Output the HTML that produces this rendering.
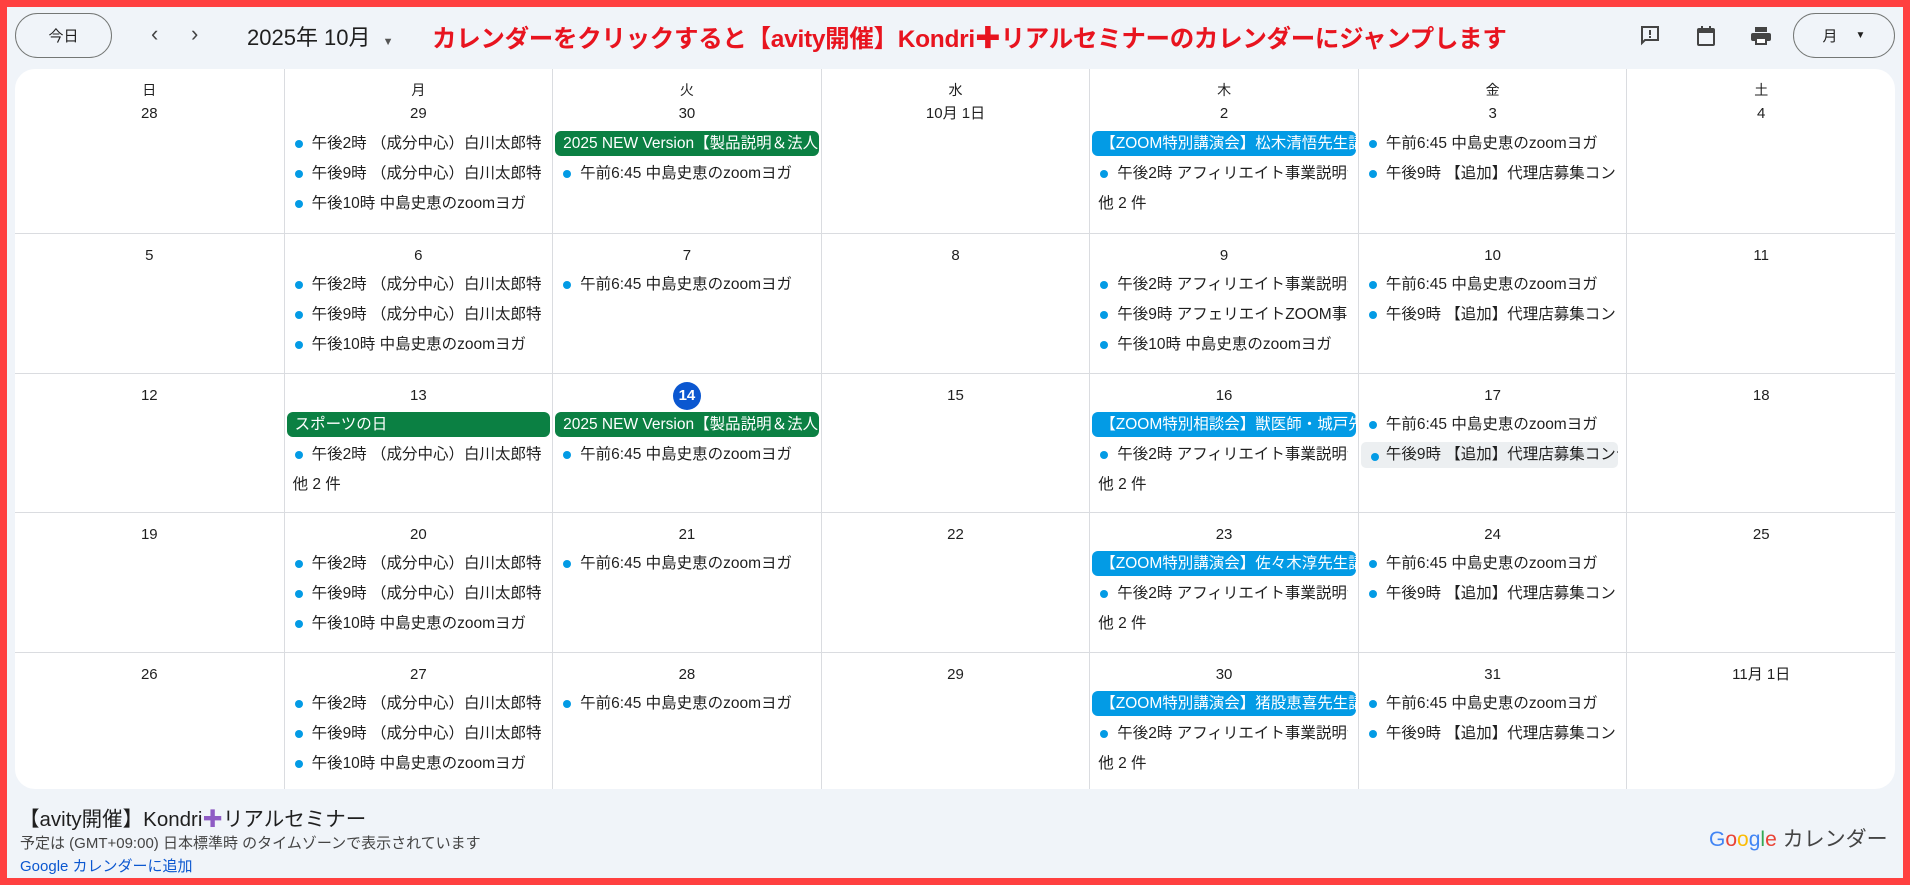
<!DOCTYPE html>
<html><head><meta charset="utf-8"><style>
*{box-sizing:border-box;margin:0;padding:0}
body{width:1910px;height:885px;background:#ff4040;font-family:"Liberation Sans","Noto Sans CJK JP",sans-serif;color:#1f1f1f;position:relative;overflow:hidden}
#in{position:absolute;left:7px;top:7px;width:1896px;height:871px;background:#f0f4f9}
.abs{position:absolute}
.btn{border:1px solid #747775;border-radius:24px;background:#f0f4f9;display:flex;align-items:center;justify-content:center;font-size:15px}
#card{position:absolute;left:8px;top:62px;width:1880px;height:720px;background:#fff;border-radius:20px;overflow:hidden;display:grid;grid-template-columns:repeat(7,1fr);grid-template-rows:164px 139.5px 139.5px 139.5px 137.5px}
.c{border-left:1px solid #dadce0;border-top:1px solid #dadce0;position:relative;overflow:hidden}
.c.f{border-left:none}.c.t{border-top:none}
.wd{position:absolute;top:11px;left:0;right:0;text-align:center;font-size:14px;line-height:20px}
.d{position:absolute;left:0;right:0;text-align:center;font-size:15px;line-height:20px;top:12px}
.t .d{top:35px}
.evs{position:absolute;top:36px;left:0;right:0}
.t .evs{top:60px}
.ev{height:30px;line-height:30px;font-size:15.5px;padding-left:27px;white-space:nowrap;overflow:hidden;position:relative;margin:0 10px 0 0}
.ev:before{content:"";position:absolute;left:10px;top:11px;width:8px;height:8px;border-radius:50%;background:#039be5}
.chip{height:25px;line-height:25px;margin:2px 2px 3px 2px;border-radius:6px;color:#fff;font-size:15.5px;padding-left:8px;white-space:nowrap;overflow:hidden}
.g{background:#0b8043}.b{background:#039be5}
.more{height:30px;line-height:30px;font-size:15.5px;padding-left:8px}
.today{display:inline-block;width:28px;height:28px;line-height:28px;border-radius:50%;background:#0b57d0;color:#fff;font-weight:bold;margin-top:-4px}
</style></head><body><div id="in">
<div class="abs btn" style="left:8px;top:6px;width:97px;height:45px">今日</div>
<div class="abs" style="left:144px;top:14px;font-size:22px;color:#444">&#8249;</div>
<div class="abs" style="left:184px;top:14px;font-size:22px;color:#444">&#8250;</div>
<div class="abs" style="left:240px;top:13px;font-size:22px;color:#1f1f1f">2025年 10月 <span style="font-size:11px;color:#555;margin-left:6px">▼</span></div>
<div class="abs" style="left:425px;top:11px;font-size:24.5px;font-weight:bold;color:#e8141f;white-space:nowrap;letter-spacing:-0.3px">カレンダーをクリックすると【avity開催】Kondri<span style="font-size:26px">✚</span>リアルセミナーのカレンダーにジャンプします</div>
<svg class="abs" style="left:1631px;top:17px" width="24" height="24" viewBox="0 0 24 24"><path d="M4 3h16v13H7l-3 3z" fill="none" stroke="#444" stroke-width="2"/><rect x="11" y="6" width="2" height="5" fill="#444"/><rect x="11" y="12" width="2" height="2" fill="#444"/></svg>
<svg class="abs" style="left:1687px;top:17px" width="24" height="24" viewBox="0 0 24 24"><rect x="4" y="5" width="16" height="16" rx="1" fill="none" stroke="#444" stroke-width="2"/><rect x="4" y="5" width="16" height="4" fill="#444"/><rect x="7" y="2" width="2" height="4" fill="#444"/><rect x="15" y="2" width="2" height="4" fill="#444"/></svg>
<svg class="abs" style="left:1742px;top:17px" width="24" height="24" viewBox="0 0 24 24"><rect x="6" y="3" width="12" height="5" fill="#444"/><rect x="2" y="9" width="20" height="8" rx="2" fill="#444"/><rect x="6" y="14" width="12" height="7" fill="#444"/><rect x="8" y="15" width="8" height="4" fill="#fff"/></svg>
<div class="abs btn" style="left:1786px;top:6px;width:102px;height:45px">月<span style="font-size:10px;margin-left:18px">▼</span></div>

<div id="card">
<div class="c f t"><div class="wd">日</div><div class="d">28</div></div>
<div class="c t"><div class="wd">月</div><div class="d">29</div><div class="evs"><div class="ev">午後2時 （成分中心）白川太郎特別講演</div><div class="ev">午後9時 （成分中心）白川太郎特別講演</div><div class="ev">午後10時 中島史恵のzoomヨガ</div></div></div>
<div class="c t"><div class="wd">火</div><div class="d">30</div><div class="evs"><div class="chip g">2025 NEW Version【製品説明＆法人向け</div><div class="ev">午前6:45 中島史恵のzoomヨガ</div></div></div>
<div class="c t"><div class="wd">水</div><div class="d">10月 1日</div></div>
<div class="c t"><div class="wd">木</div><div class="d">2</div><div class="evs"><div class="chip b">【ZOOM特別講演会】松木清悟先生講演</div><div class="ev">午後2時 アフィリエイト事業説明会</div><div class="more">他 2 件</div></div></div>
<div class="c t"><div class="wd">金</div><div class="d">3</div><div class="evs"><div class="ev">午前6:45 中島史恵のzoomヨガ</div><div class="ev">午後9時 【追加】代理店募集コンテスト</div></div></div>
<div class="c t"><div class="wd">土</div><div class="d">4</div></div>

<div class="c f"><div class="d">5</div></div>
<div class="c"><div class="d">6</div><div class="evs"><div class="ev">午後2時 （成分中心）白川太郎特別講演</div><div class="ev">午後9時 （成分中心）白川太郎特別講演</div><div class="ev">午後10時 中島史恵のzoomヨガ</div></div></div>
<div class="c"><div class="d">7</div><div class="evs"><div class="ev">午前6:45 中島史恵のzoomヨガ</div></div></div>
<div class="c"><div class="d">8</div></div>
<div class="c"><div class="d">9</div><div class="evs"><div class="ev">午後2時 アフィリエイト事業説明会</div><div class="ev">午後9時 アフェリエイトZOOM事業説明</div><div class="ev">午後10時 中島史恵のzoomヨガ</div></div></div>
<div class="c"><div class="d">10</div><div class="evs"><div class="ev">午前6:45 中島史恵のzoomヨガ</div><div class="ev">午後9時 【追加】代理店募集コンテスト</div></div></div>
<div class="c"><div class="d">11</div></div>

<div class="c f"><div class="d">12</div></div>
<div class="c"><div class="d">13</div><div class="evs"><div class="chip g">スポーツの日</div><div class="ev">午後2時 （成分中心）白川太郎特別講演</div><div class="more">他 2 件</div></div></div>
<div class="c"><div class="d"><span class="today">14</span></div><div class="evs"><div class="chip g">2025 NEW Version【製品説明＆法人向け</div><div class="ev">午前6:45 中島史恵のzoomヨガ</div></div></div>
<div class="c"><div class="d">15</div></div>
<div class="c"><div class="d">16</div><div class="evs"><div class="chip b">【ZOOM特別相談会】獣医師・城戸先生</div><div class="ev">午後2時 アフィリエイト事業説明会</div><div class="more">他 2 件</div></div></div>
<div class="c"><div class="d">17</div><div class="evs"><div class="ev">午前6:45 中島史恵のzoomヨガ</div><div class="ev" style="background:#eceff1;border-radius:5px;margin:2px 8px 2px 2px;height:26px;line-height:26px;padding-left:25px">午後9時 【追加】代理店募集コンテスト</div></div></div>
<div class="c"><div class="d">18</div></div>

<div class="c f"><div class="d">19</div></div>
<div class="c"><div class="d">20</div><div class="evs"><div class="ev">午後2時 （成分中心）白川太郎特別講演</div><div class="ev">午後9時 （成分中心）白川太郎特別講演</div><div class="ev">午後10時 中島史恵のzoomヨガ</div></div></div>
<div class="c"><div class="d">21</div><div class="evs"><div class="ev">午前6:45 中島史恵のzoomヨガ</div></div></div>
<div class="c"><div class="d">22</div></div>
<div class="c"><div class="d">23</div><div class="evs"><div class="chip b">【ZOOM特別講演会】佐々木淳先生講演</div><div class="ev">午後2時 アフィリエイト事業説明会</div><div class="more">他 2 件</div></div></div>
<div class="c"><div class="d">24</div><div class="evs"><div class="ev">午前6:45 中島史恵のzoomヨガ</div><div class="ev">午後9時 【追加】代理店募集コンテスト</div></div></div>
<div class="c"><div class="d">25</div></div>

<div class="c f"><div class="d">26</div></div>
<div class="c"><div class="d">27</div><div class="evs"><div class="ev">午後2時 （成分中心）白川太郎特別講演</div><div class="ev">午後9時 （成分中心）白川太郎特別講演</div><div class="ev">午後10時 中島史恵のzoomヨガ</div></div></div>
<div class="c"><div class="d">28</div><div class="evs"><div class="ev">午前6:45 中島史恵のzoomヨガ</div></div></div>
<div class="c"><div class="d">29</div></div>
<div class="c"><div class="d">30</div><div class="evs"><div class="chip b">【ZOOM特別講演会】猪股恵喜先生講演</div><div class="ev">午後2時 アフィリエイト事業説明会</div><div class="more">他 2 件</div></div></div>
<div class="c"><div class="d">31</div><div class="evs"><div class="ev">午前6:45 中島史恵のzoomヨガ</div><div class="ev">午後9時 【追加】代理店募集コンテスト</div></div></div>
<div class="c"><div class="d">11月 1日</div></div>
</div>

<div class="abs" style="left:12px;top:795px;font-size:20.5px;white-space:nowrap">【avity開催】Kondri<span style="color:#8e5bc4">✚</span>リアルセミナー</div>
<div class="abs" style="left:13px;top:825px;font-size:15px;color:#444;white-space:nowrap">予定は (GMT+09:00) 日本標準時 のタイムゾーンで表示されています</div>
<div class="abs" style="left:13px;top:848px;font-size:15px;color:#0b57d0;white-space:nowrap">Google カレンダーに追加</div>
<div class="abs" style="left:1702px;top:816px;font-size:21px;white-space:nowrap;color:#444"><span style="color:#4285f4">G</span><span style="color:#ea4335">o</span><span style="color:#fbbc05">o</span><span style="color:#4285f4">g</span><span style="color:#34a853">l</span><span style="color:#ea4335">e</span> カレンダー</div>
</div></body></html>
